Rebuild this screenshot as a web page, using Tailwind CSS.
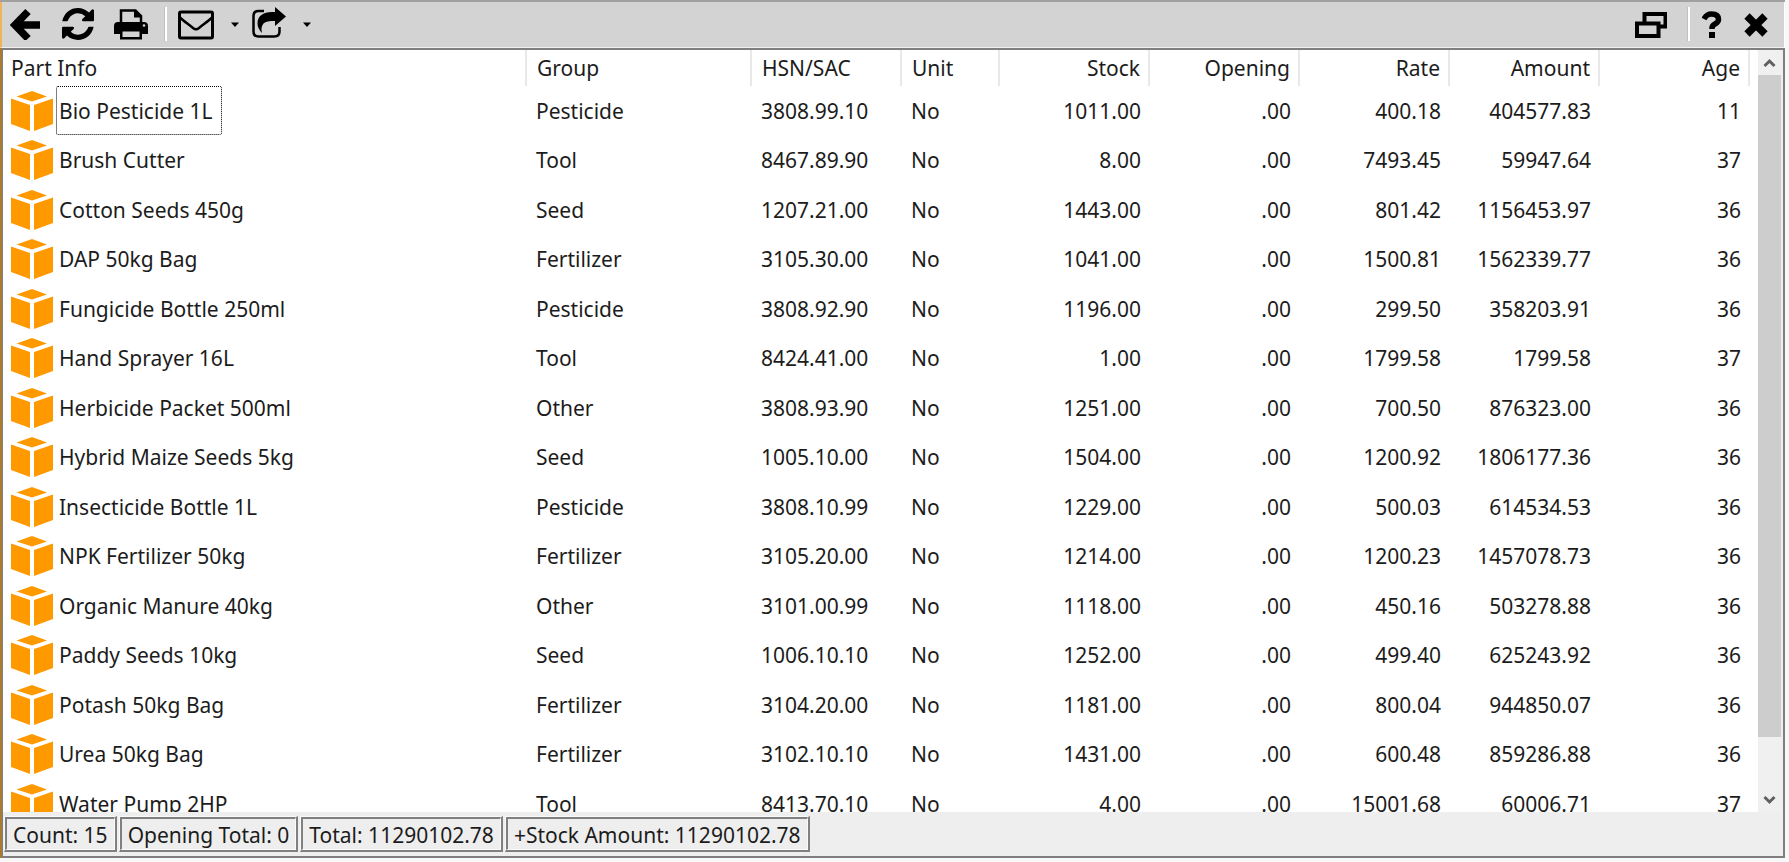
<!DOCTYPE html>
<html lang="en">

<head>
    <meta charset="UTF-8">
    <meta name="viewport" content="width=device-width, initial-scale=1.0">
    <title>Stock Report</title>
    <!-- Tailwind CSS CDN -->
    <script src="https://cdn.jsdelivr.net/npm/@tailwindcss/browser@4"></script>
</head>

<body class="h-screen overflow-hidden bg-[#f8f8f8] pr-1 pb-1 font-['Noto_Sans',sans-serif] text-[21px] leading-7 text-[#1c1c1c]">
    <div class="flex h-full flex-col border-t-2 border-t-[#a0a0a0]">
        <!-- Toolbar -->
        <header class="flex h-[46px] shrink-0 items-center border-r border-b border-l-2 border-r-white border-b-[#f0f0f0] border-l-[#efb458] bg-[#d3d3d3] pr-4 pb-[2px] pl-2">
            <button type="button" aria-label="Back" class="h-8 w-8">
                <svg class="h-8 w-8" viewBox="0 0 32 32">
                    <path d="M18 3.500 5 17l13 13.500M6 17h24" fill="none" stroke="#000" stroke-width="7.500" />
                </svg>
            </button>
            <button type="button" aria-label="Refresh" class="ml-5 h-8 w-8">
                <svg class="h-8 w-8" viewBox="0 0 1536 1536">
                    <path d="M1511 928q0 5-1 7-64 268-268 434.500T764 1536q-146 0-282.500-55T238 1324l-129 129q-19 19-45 19t-45-19-19-45V960q0-26 19-45t45-19h448q26 0 45 19t19 45-19 45l-137 137q71 66 161 102t187 36q134 0 250-65t186-179q11-17 53-117 8-23 30-23h192q13 0 22.500 9.500t9.500 22.500zm25-800v448q0 26-19 45t-45 19h-448q-26 0-45-19t-19-45 19-45l138-138Q969 256 768 256q-134 0-250 65T332 500q-11 17-53 117-8 23-30 23H50q-13 0-22.500-9.500T18 608v-7q65-268 270-434.500T768 0q146 0 284 55.500T1297 212l130-129q19-19 45-19t45 19 19 45z" />
                </svg>
            </button>
            <button type="button" aria-label="Print" class="ml-5 h-8 w-[34px]">
                <svg class="h-8 w-[34px]" viewBox="0 0 34 32">
                    <path d="M7 15V2.500h14.500L27 8v7" fill="#d3d3d3" stroke="#000" stroke-width="2.500" />
                    <path d="M20 2v7.500h7.500z" />
                    <path fill-rule="evenodd" d="M4 14h26q4 0 4 4v8h-6v5.500H6V26H0v-8q0-4 4-4zm4.500 9.500v5.500h17v-5.500z" />
                    <circle cx="30" cy="17.500" r="1.300" fill="#d3d3d3" />
                </svg>
            </button>
            <span class="ml-4 h-[34px] w-[3px] border-r-2 border-l border-r-white border-l-[#c0c0c0]"></span>
            <button type="button" aria-label="Mail" class="ml-[11px] h-8 w-9">
                <svg class="h-8 w-9" viewBox="0 0 36 32" fill="none" stroke="#000">
                    <rect x="1.500" y="4" width="33" height="26" rx="1.500" stroke-width="3" />
                    <path d="M2 9.500c4 4 9 7 13 10.500q3 2.500 6 0c4-3.500 9-6.500 13-10.500" stroke-width="2.500" />
                </svg>
            </button>
            <button type="button" aria-label="Mail options" class="ml-[17px] h-8 w-2">
                <svg class="h-8 w-2" viewBox="0 0 8 32"><path d="M0 14.500h8l-4 4.500z" /></svg>
            </button>
            <button type="button" aria-label="Share" class="ml-[13px] h-9 w-[34px] pb-1">
                <svg class="h-8 w-[34px]" viewBox="0 0 34 32">
                    <path d="M12 5H6.500Q1.500 5 1.500 10v15.500q0 5 5 5h16q5 0 5-5V21" fill="none" stroke="#000" stroke-width="2.500" />
                    <path d="M23 1v5h-3C11 6 5.500 10 5.500 17.500q0 5 4.500 9.500-1.500-6 1.500-9.500Q14 15 20 15h3v5l11-9.500z" />
                </svg>
            </button>
            <button type="button" aria-label="Share options" class="ml-[17px] h-8 w-2">
                <svg class="h-8 w-2" viewBox="0 0 8 32"><path d="M0 14.500h8l-4 4.500z" /></svg>
            </button>

            <button type="button" aria-label="Restore window" class="ml-auto h-8 w-8">
                <svg class="h-8 w-8" viewBox="0 0 32 32" fill="#d3d3d3" stroke="#000">
                    <path d="M9.500 6h21v12.500h-21z" stroke-width="4" />
                    <path d="M2 15.500h21.500V28H2z" stroke-width="4" />
                </svg>
            </button>
            <span class="ml-5 h-[34px] w-[3px] border-r-2 border-l border-r-white border-l-[#c0c0c0]"></span>
            <button type="button" aria-label="Help" class="ml-3 h-8 w-5">
                <svg class="h-8 w-5" viewBox="0 0 20 32">
                    <path d="M2 11Q4.500 6 9.500 6q7 0 7 5.500 0 2.500-3.500 4.500-3 1.500-3 4v1" fill="none" stroke="#000" stroke-width="5.500" />
                    <path d="M7 24h6v6H7z" />
                </svg>
            </button>
            <button type="button" aria-label="Close" class="ml-[22px] h-8 w-6">
                <svg class="h-8 w-6" viewBox="0 0 24 32"><path d="m3 8 18 18M21 8 3 26" fill="none" stroke="#000" stroke-width="7.500" /></svg>
            </button>
        </header>

        <div class="flex min-h-0 flex-1 flex-col border-l-2 border-[#a87b32]">
            <div class="flex min-h-0 flex-1 flex-col border-2 border-l border-[#7f7f7f] bg-[#eeeeee]">
                <!-- Stock list -->
                <main class="flex min-h-0 flex-1 pr-[2px]">
                    <div class="min-w-0 flex-1 overflow-hidden bg-white pr-2">
                        <table class="w-full table-fixed">
                            <colgroup>
                                <col>
                                <col class="w-[225px]">
                                <col class="w-[150px]">
                                <col class="w-[98px]">
                                <col class="w-[150px]">
                                <col class="w-[150px]">
                                <col class="w-[150px]">
                                <col class="w-[150px]">
                                <col class="w-[150px]">
                            </colgroup>
                            <thead>
                                <tr class="h-9 *:border-r-2 *:border-[#e8e8e8] *:px-2 *:text-left *:font-normal *:nth-[n+2]:pl-[10px] *:nth-[n+5]:text-right">
                                    <th>Part Info</th>
                                    <th>Group</th>
                                    <th>HSN/SAC</th>
                                    <th>Unit</th>
                                    <th>Stock</th>
                                    <th>Opening</th>
                                    <th>Rate</th>
                                    <th>Amount</th>
                                    <th>Age</th>
                                </tr>
                            </thead>
                            <tbody id="stockRows"></tbody>
                        </table>
                    </div>

                    <!-- Scrollbar -->
                    <div class="flex w-[23px] flex-col bg-[#f0f0f0]">
                        <button type="button" aria-label="Scroll up" class="h-[25px]">
                            <svg class="h-[25px] w-[23px]" viewBox="0 0 23 25"><path d="m6.500 16 5-5 5 5" fill="none" stroke="#606060" stroke-width="3" /></svg>
                        </button>
                        <div class="flex-1">
                            <div class="h-[93%] bg-[#cdcdcd]"></div>
                        </div>
                        <button type="button" aria-label="Scroll down" class="h-[25px]">
                            <svg class="h-[25px] w-[23px]" viewBox="0 0 23 25"><path d="m6.500 10 5 5 5-5" fill="none" stroke="#606060" stroke-width="3" /></svg>
                        </button>
                    </div>
                </main>

                <!-- Totals -->
                <footer id="totals" class="flex h-11 shrink-0 items-start gap-[2px] pt-1 pl-px"></footer>
            </div>
        </div>
    </div>

    <script>
        const items = [
            ['Bio Pesticide 1L', 'Pesticide', '3808.99.10', 'No', '1011.00', '.00', '400.18', '404577.83', 11],
            ['Brush Cutter', 'Tool', '8467.89.90', 'No', '8.00', '.00', '7493.45', '59947.64', 37],
            ['Cotton Seeds 450g', 'Seed', '1207.21.00', 'No', '1443.00', '.00', '801.42', '1156453.97', 36],
            ['DAP 50kg Bag', 'Fertilizer', '3105.30.00', 'No', '1041.00', '.00', '1500.81', '1562339.77', 36],
            ['Fungicide Bottle 250ml', 'Pesticide', '3808.92.90', 'No', '1196.00', '.00', '299.50', '358203.91', 36],
            ['Hand Sprayer 16L', 'Tool', '8424.41.00', 'No', '1.00', '.00', '1799.58', '1799.58', 37],
            ['Herbicide Packet 500ml', 'Other', '3808.93.90', 'No', '1251.00', '.00', '700.50', '876323.00', 36],
            ['Hybrid Maize Seeds 5kg', 'Seed', '1005.10.00', 'No', '1504.00', '.00', '1200.92', '1806177.36', 36],
            ['Insecticide Bottle 1L', 'Pesticide', '3808.10.99', 'No', '1229.00', '.00', '500.03', '614534.53', 36],
            ['NPK Fertilizer 50kg', 'Fertilizer', '3105.20.00', 'No', '1214.00', '.00', '1200.23', '1457078.73', 36],
            ['Organic Manure 40kg', 'Other', '3101.00.99', 'No', '1118.00', '.00', '450.16', '503278.88', 36],
            ['Paddy Seeds 10kg', 'Seed', '1006.10.10', 'No', '1252.00', '.00', '499.40', '625243.92', 36],
            ['Potash 50kg Bag', 'Fertilizer', '3104.20.00', 'No', '1181.00', '.00', '800.04', '944850.07', 36],
            ['Urea 50kg Bag', 'Fertilizer', '3102.10.10', 'No', '1431.00', '.00', '600.48', '859286.88', 36],
            ['Water Pump 2HP', 'Tool', '8413.70.10', 'No', '4.00', '.00', '15001.68', '60006.71', 37],
        ];

        const totals = ['Count: 15', 'Opening Total: 0', 'Total: 11290102.78', '+Stock Amount: 11290102.78'];

        // First row has the keyboard focus
        document.getElementById('stockRows').innerHTML = items.map(([name, ...cells], i) => `
            <tr class="odd:h-[49px] even:h-[50px] *:px-2 *:py-0 *:nth-[n+2]:pl-[10px] *:nth-[n+5]:text-right">
                <td>
                    <div class="flex items-center gap-[3px]">
                        <svg class="h-10 w-[42px] shrink-0" viewBox="0 0 42 40">
                            <path fill="#ff9900" d="M21 0 36 5.500 21 10.500 5.500 5.500zM0 7.500 19 14v26L0 33zM42 7.500 23 14v26l19-7z" />
                        </svg>
                        <span class="flex h-[49px] items-center rounded-xs border border-dotted pr-2 pl-[2px] ${i === 0 ? 'border-black' : 'border-transparent'}">${name}</span>
                    </div>
                </td>
                ${cells.map((cell) => `<td>${cell}</td>`).join('')}
            </tr>`).join('');

        document.getElementById('totals').innerHTML = totals.map((text) => `
            <div class="border-2 border-t border-l border-t-[#fafafa] border-r-[#808080] border-b-[#808080] border-l-[#fafafa]">
                <div class="h-[33px] border-2 border-r border-b border-t-[#808080] border-r-[#fafafa] border-b-[#fafafa] border-l-[#808080] px-[6px] pt-[2px]">${text}</div>
            </div>`).join('');
    </script>
</body>

</html>
